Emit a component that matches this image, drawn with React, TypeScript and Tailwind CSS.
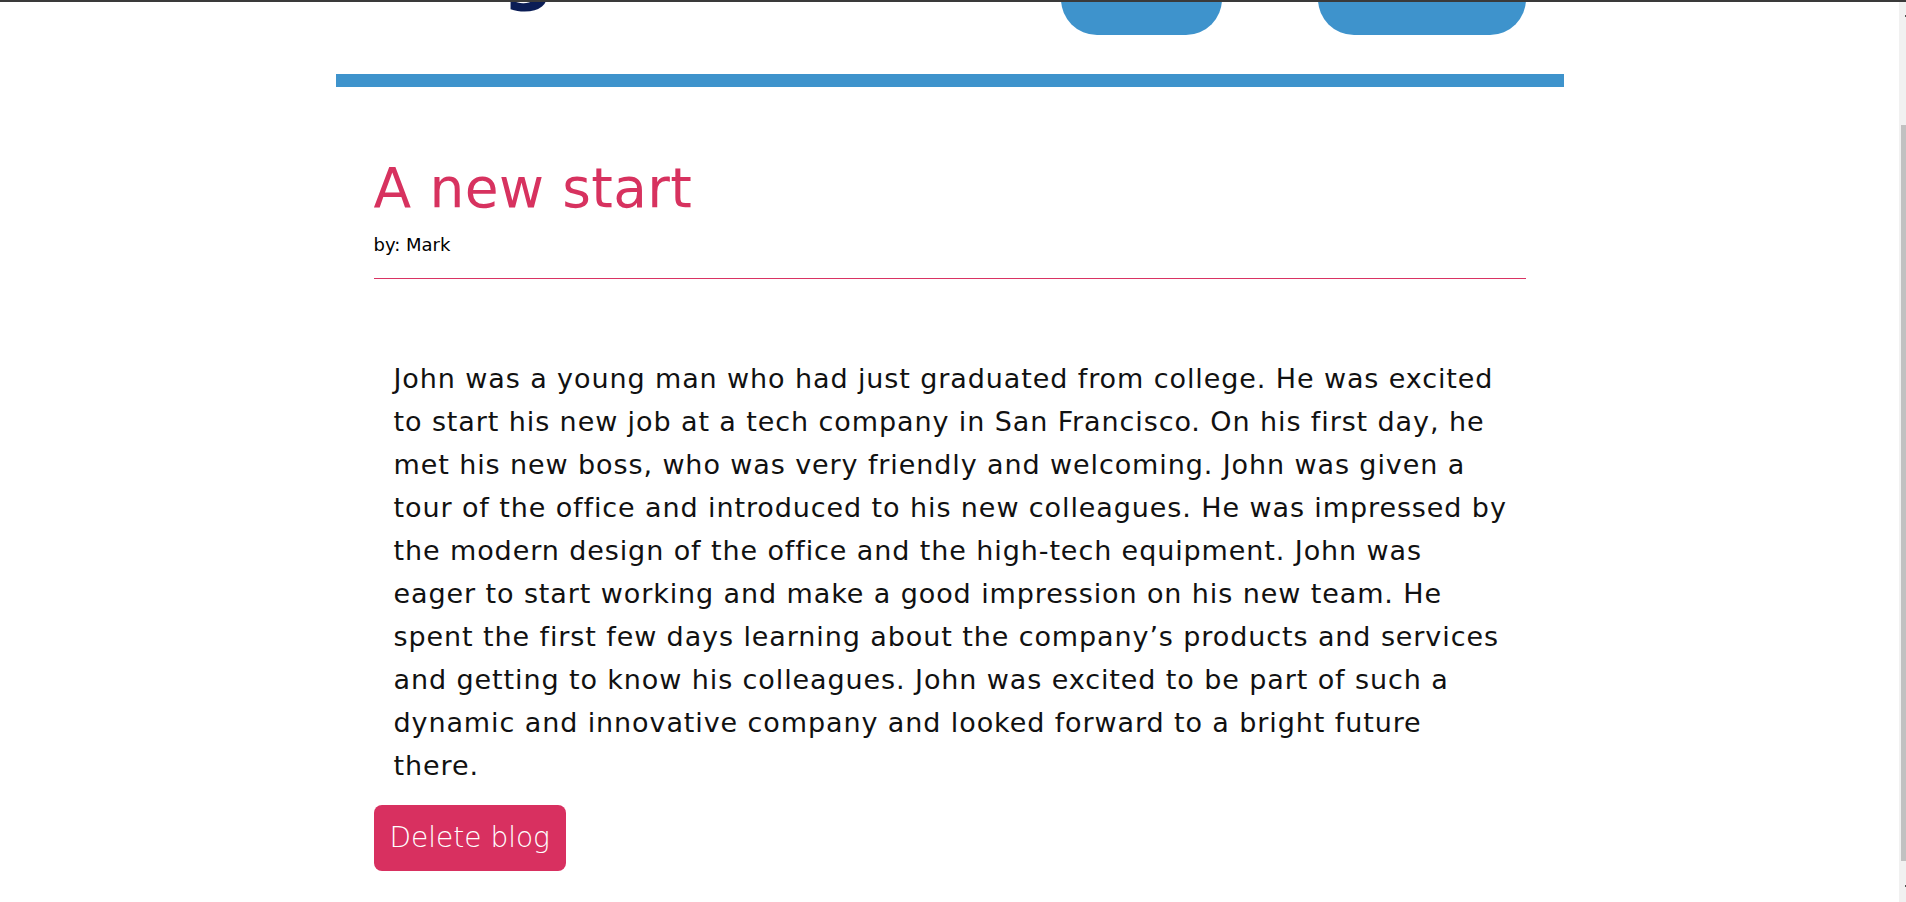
import React from 'react';

const storyLines = [
  'John was a young man who had just graduated from college. He was excited',
  'to start his new job at a tech company in San Francisco. On his first day, he',
  'met his new boss, who was very friendly and welcoming. John was given a',
  'tour of the office and introduced to his new colleagues. He was impressed by',
  'the modern design of the office and the high-tech equipment. John was',
  'eager to start working and make a good impression on his new team. He',
  'spent the first few days learning about the company\u2019s products and services',
  'and getting to know his colleagues. John was excited to be part of such a',
  'dynamic and innovative company and looked forward to a bright future',
  'there.',
];

function Scrollbar() {
  return (
    <div className="w-[7px] shrink-0 bg-[#f1f1f1] flex flex-col">
      <div className="mt-[13px] ml-auto w-px h-[2px] bg-[#505050]" />
      <div className="mt-[108px] ml-[2px] h-[736px] bg-[#c1c1c1]" />
      <div className="mt-[24px] ml-auto w-px h-[2px] bg-[#505050]" />
    </div>
  );
}

export default function App() {
  return (
    <div className="h-screen w-full overflow-hidden bg-white flex flex-col font-['DejaVu_Sans',sans-serif]">
      <div className="h-[2px] shrink-0 bg-[#3a3a3a]" />
      <div className="flex flex-1 min-h-0">
        <div className="flex-1 overflow-hidden">
          <div className="w-[1228px] mx-auto">
            {/* navbar, scrolled mostly out of view */}
            <nav className="-mt-[67px] px-[38px] flex items-end justify-between">
              <h1 className="mb-[28px] text-[72px] leading-none font-bold text-[#0b1d55]">Blog</h1>
              <div className="flex gap-[96px]">
                <a href="#" className="w-[161px] h-[100px] rounded-[36px] bg-[#3e93cc] text-white text-lg flex items-center justify-center">Home</a>
                <a href="#" className="w-[208px] h-[100px] rounded-[36px] bg-[#3e93cc] text-white text-lg flex items-center justify-center">New Blog</a>
              </div>
            </nav>
            <div className="mt-[39px] h-[13px] bg-[#3e93cc]" />

            <article className="px-[38px] pt-[69px]">
              <h2 className="text-[55px] leading-[64px] tracking-[0.4px] font-normal text-[#d7325f]">A new start</h2>
              <p className="mt-[13px] text-[18px] leading-[24px] text-black">by: Mark</p>
              <div className="mt-[21px] h-px bg-[#d93363]" />
              <p className="mt-[78px] px-5 whitespace-nowrap text-[27px] leading-[43px] tracking-[0.9px] text-[#111]">
                {storyLines.map((line, i) => (
                  <React.Fragment key={i}>
                    {line}
                    {i < storyLines.length - 1 && <br />}
                  </React.Fragment>
                ))}
              </p>
              <button className="mt-[18px] h-[66px] px-4 rounded-[8px] bg-[#d83060] text-white text-[28px] font-light">
                Delete blog
              </button>
            </article>
          </div>
        </div>
        <Scrollbar />
      </div>
    </div>
  );
}
